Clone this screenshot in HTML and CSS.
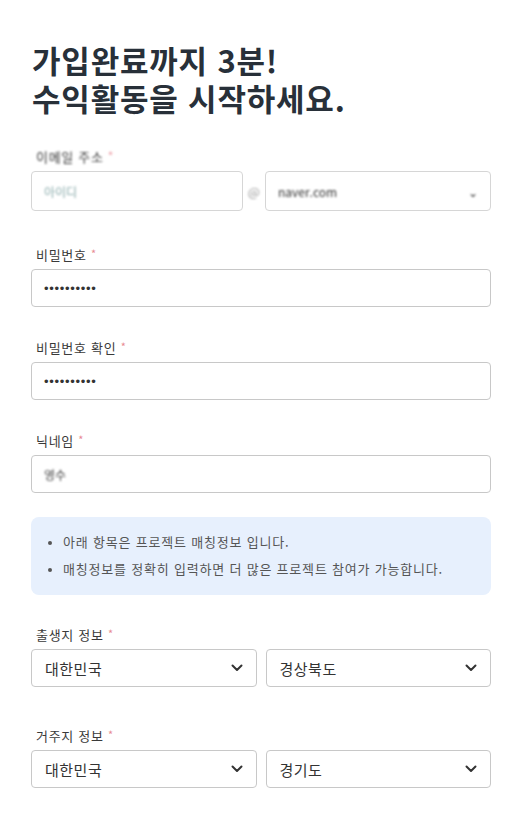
FILE: index.html
```html
<!DOCTYPE html>
<html lang="ko">
<head>
<meta charset="utf-8">
<link rel="stylesheet" href="styles.css">
</head>
<body>
<main class="page">
  <h1 class="title"><span class="title-line">가입완료까지 3분!</span><span class="title-line">수익활동을 시작하세요.</span></h1>

  <section class="field field-email">
    <div class="label blurred">이메일 주소 <span class="req">*</span></div>
    <div class="email-row">
      <div class="box email-box"><span class="blurred muted">아이디</span></div>
      <span class="at">@</span>
      <div class="box email-box"><span class="blurred">naver.com</span><span class="mini-caret blurred">⌄</span></div>
    </div>
  </section>

  <section class="field gap-first">
    <div class="label">비밀번호 <span class="req">*</span></div>
    <div class="box"><span class="dots">••••••••••</span></div>
  </section>

  <section class="field gap-a">
    <div class="label">비밀번호 확인 <span class="req">*</span></div>
    <div class="box"><span class="dots">••••••••••</span></div>
  </section>

  <section class="field gap-a">
    <div class="label">닉네임 <span class="req">*</span></div>
    <div class="box"><span class="blurred nick">영수</span></div>
  </section>

  <div class="notice">
    <ul>
      <li>아래 항목은 프로젝트 매칭정보 입니다.</li>
      <li>매칭정보를 정확히 입력하면 더 많은 프로젝트 참여가 가능합니다.</li>
    </ul>
  </div>

  <section class="field gap-b">
    <div class="label">출생지 정보 <span class="req">*</span></div>
    <div class="select-row">
      <div class="box select"><span>대한민국</span><svg class="chev" viewBox="0 0 12 8" width="12" height="8"><path d="M1.5 1.5 L6 6 L10.5 1.5" fill="none" stroke="#333" stroke-width="2" stroke-linecap="round" stroke-linejoin="round"/></svg></div>
      <div class="box select"><span>경상북도</span><svg class="chev" viewBox="0 0 12 8" width="12" height="8"><path d="M1.5 1.5 L6 6 L10.5 1.5" fill="none" stroke="#333" stroke-width="2" stroke-linecap="round" stroke-linejoin="round"/></svg></div>
    </div>
  </section>

  <section class="field gap-c">
    <div class="label">거주지 정보 <span class="req">*</span></div>
    <div class="select-row">
      <div class="box select"><span>대한민국</span><svg class="chev" viewBox="0 0 12 8" width="12" height="8"><path d="M1.5 1.5 L6 6 L10.5 1.5" fill="none" stroke="#333" stroke-width="2" stroke-linecap="round" stroke-linejoin="round"/></svg></div>
      <div class="box select"><span>경기도</span><svg class="chev" viewBox="0 0 12 8" width="12" height="8"><path d="M1.5 1.5 L6 6 L10.5 1.5" fill="none" stroke="#333" stroke-width="2" stroke-linecap="round" stroke-linejoin="round"/></svg></div>
    </div>
  </section>
</main>
</body>
</html>
```

FILE: styles.css
```css
html, body {
  margin: 0;
  padding: 0;
  background: #ffffff;
}
body {
  font-family: "Noto Sans CJK KR", "Noto Sans", "Liberation Sans", sans-serif;
  color: #333;
}
.page {
  width: 460px;
  margin-left: 31px;
  padding-top: 41px;
}
.title {
  margin: 0 0 0 1px;
  font-size: 31px;
  font-weight: 700;
  color: #283039;
  letter-spacing: 0.8px;
}
.title-line {
  display: block;
  height: 38px;
  line-height: 38px;
}
.field-email {
  margin-top: 29px;
}
.gap-first { margin-top: 33px; }
.gap-a { margin-top: 30px; }
.gap-b { margin-top: 29px; }
.gap-c { margin-top: 38px; }
.label {
  font-size: 13px;
  line-height: 18px;
  color: #3a3a3a;
  margin-left: 5px;
  margin-bottom: 5px;
  letter-spacing: 0.7px;
}
.req {
  color: #e88a94;
  font-size: 11px;
  vertical-align: 2px;
}
.box {
  box-sizing: border-box;
  height: 38px;
  border: 1px solid #c8c8c8;
  border-radius: 4px;
  display: flex;
  align-items: center;
  padding: 0 12px;
  background: #fff;
}
.dots {
  font-family: "Liberation Sans", sans-serif;
  font-size: 13px;
  letter-spacing: 0.7px;
  color: #333;
}
.blurred {
  filter: blur(1.2px);
}
.muted { color: #8aa; font-size: 12px; }
.nick { color: #444; font-size: 12px; }
.email-row {
  display: grid;
  grid-template-columns: 212px 22px 1fr;
  align-items: center;
}
.email-row .email-box {
  height: 40px;
  border-color: #d6d6d6;
  font-size: 12px;
  justify-content: space-between;
}
.at {
  text-align: center;
  color: #999;
  font-size: 13px;
  filter: blur(0.8px);
}
.mini-caret { font-size: 12px; }
.notice {
  margin-top: 24px;
  background: #e7f0fd;
  border-radius: 8px;
  padding: 11px 0 13px 0;
}
.notice ul {
  margin: 0;
  padding-left: 32px;
}
.notice li {
  font-size: 13px;
  line-height: 27px;
  color: #555;
  letter-spacing: 0.8px;
}
.notice li::marker {
  font-size: 11px;
}
.select-row {
  display: flex;
  gap: 9px;
}
.select {
  flex: 1;
  justify-content: space-between;
  font-size: 15px;
  color: #333;
  padding: 0 13px 0 13px;
  letter-spacing: 0.5px;
}
.chev {
  display: block;
}
```
